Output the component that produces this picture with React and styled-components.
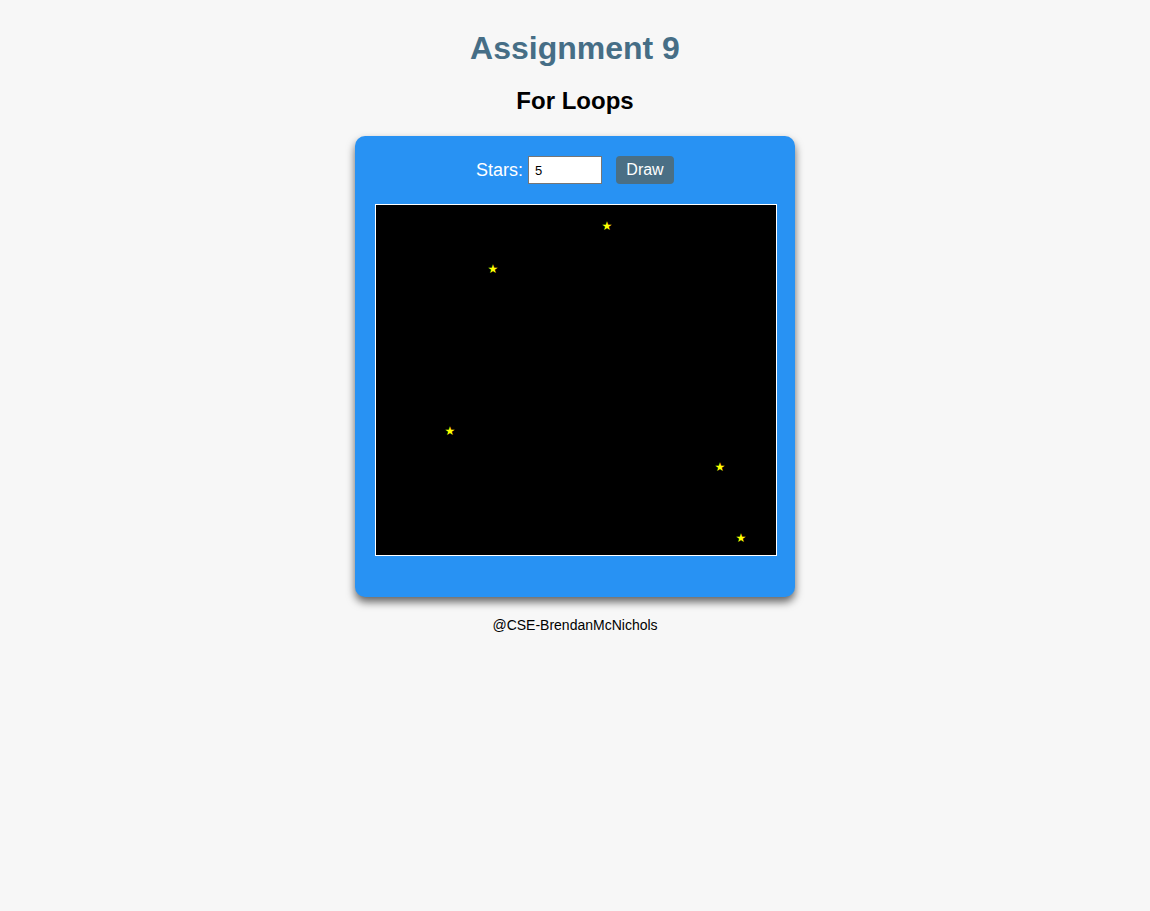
import React from "react";
import styled, { createGlobalStyle } from "styled-components";

const Global = createGlobalStyle`
  html, body { margin: 0; padding: 0; background: #f7f7f7; }
  body { font-family: "Liberation Sans", Arial, sans-serif; }
`;

const Page = styled.div`
  display: flex;
  flex-direction: column;
  align-items: center;
  padding-top: 30px;
`;

const Title = styled.h1`
  margin: 0;
  font-size: 32px;
  line-height: 37px;
  font-weight: bold;
  color: #466e86;
`;

const Subtitle = styled.h2`
  margin: 20px 0 0;
  font-size: 24px;
  line-height: 28px;
  font-weight: bold;
  color: #000;
`;

const Panel = styled.div`
  margin-top: 21px;
  width: 440px;
  box-sizing: border-box;
  background: #2892f3;
  border-radius: 10px;
  box-shadow: 0 5px 9px rgba(0, 0, 0, 0.6);
  padding: 20px 18px 41px 20px;
  display: flex;
  flex-direction: column;
  align-items: flex-start;
`;

const Controls = styled.div`
  align-self: stretch;
  display: flex;
  justify-content: center;
  align-items: center;
  height: 28px;
  padding-right: 2px;
`;

const Label = styled.label`
  color: #fff;
  font-size: 18px;
  margin-right: 5px;
`;

const Input = styled.input`
  box-sizing: border-box;
  width: 74px;
  height: 28px;
  border: 1px solid #767676;
  padding: 0 6px;
  font-size: 13px;
  font-family: "Liberation Sans", Arial, sans-serif;
  background: #fff;
  color: #000;
`;

const Button = styled.button`
  box-sizing: border-box;
  margin-left: 14px;
  width: 58px;
  height: 28px;
  border: none;
  border-radius: 4px;
  background: #4a6f85;
  color: #fff;
  font-size: 16px;
  font-family: "Liberation Sans", Arial, sans-serif;
  padding: 0;
`;

const Canvas = styled.div`
  position: relative;
  margin-top: 20px;
  width: 400px;
  height: 350px;
  background: #000;
  border: 1px solid #fff;
`;

const Star = styled.span`
  position: absolute;
  color: #ffff00;
  font-size: 12px;
  line-height: 12px;
  font-family: "DejaVu Sans", sans-serif;
  transform: translate(-50%, -50%);
`;

const Footer = styled.p`
  margin: 20px 0 0;
  font-size: 14px;
  line-height: 16px;
  color: #000;
`;

const stars = [
  [606, 225],
  [492, 268],
  [449, 430],
  [719, 466],
  [740, 537],
];

export default function App() {
  return (
    <>
      <Global />
      <Page>
        <Title>Assignment 9</Title>
        <Subtitle>For Loops</Subtitle>
        <Panel>
          <Controls>
            <Label htmlFor="stars">Stars:</Label>
            <Input id="stars" type="text" defaultValue="5" />
            <Button>Draw</Button>
          </Controls>
          <Canvas>
            {stars.map(([x, y], i) => (
              <Star key={i} style={{ left: x - 375, top: y - 204 }}>
                ★
              </Star>
            ))}
          </Canvas>
        </Panel>
        <Footer>@CSE-BrendanMcNichols</Footer>
      </Page>
    </>
  );
}
